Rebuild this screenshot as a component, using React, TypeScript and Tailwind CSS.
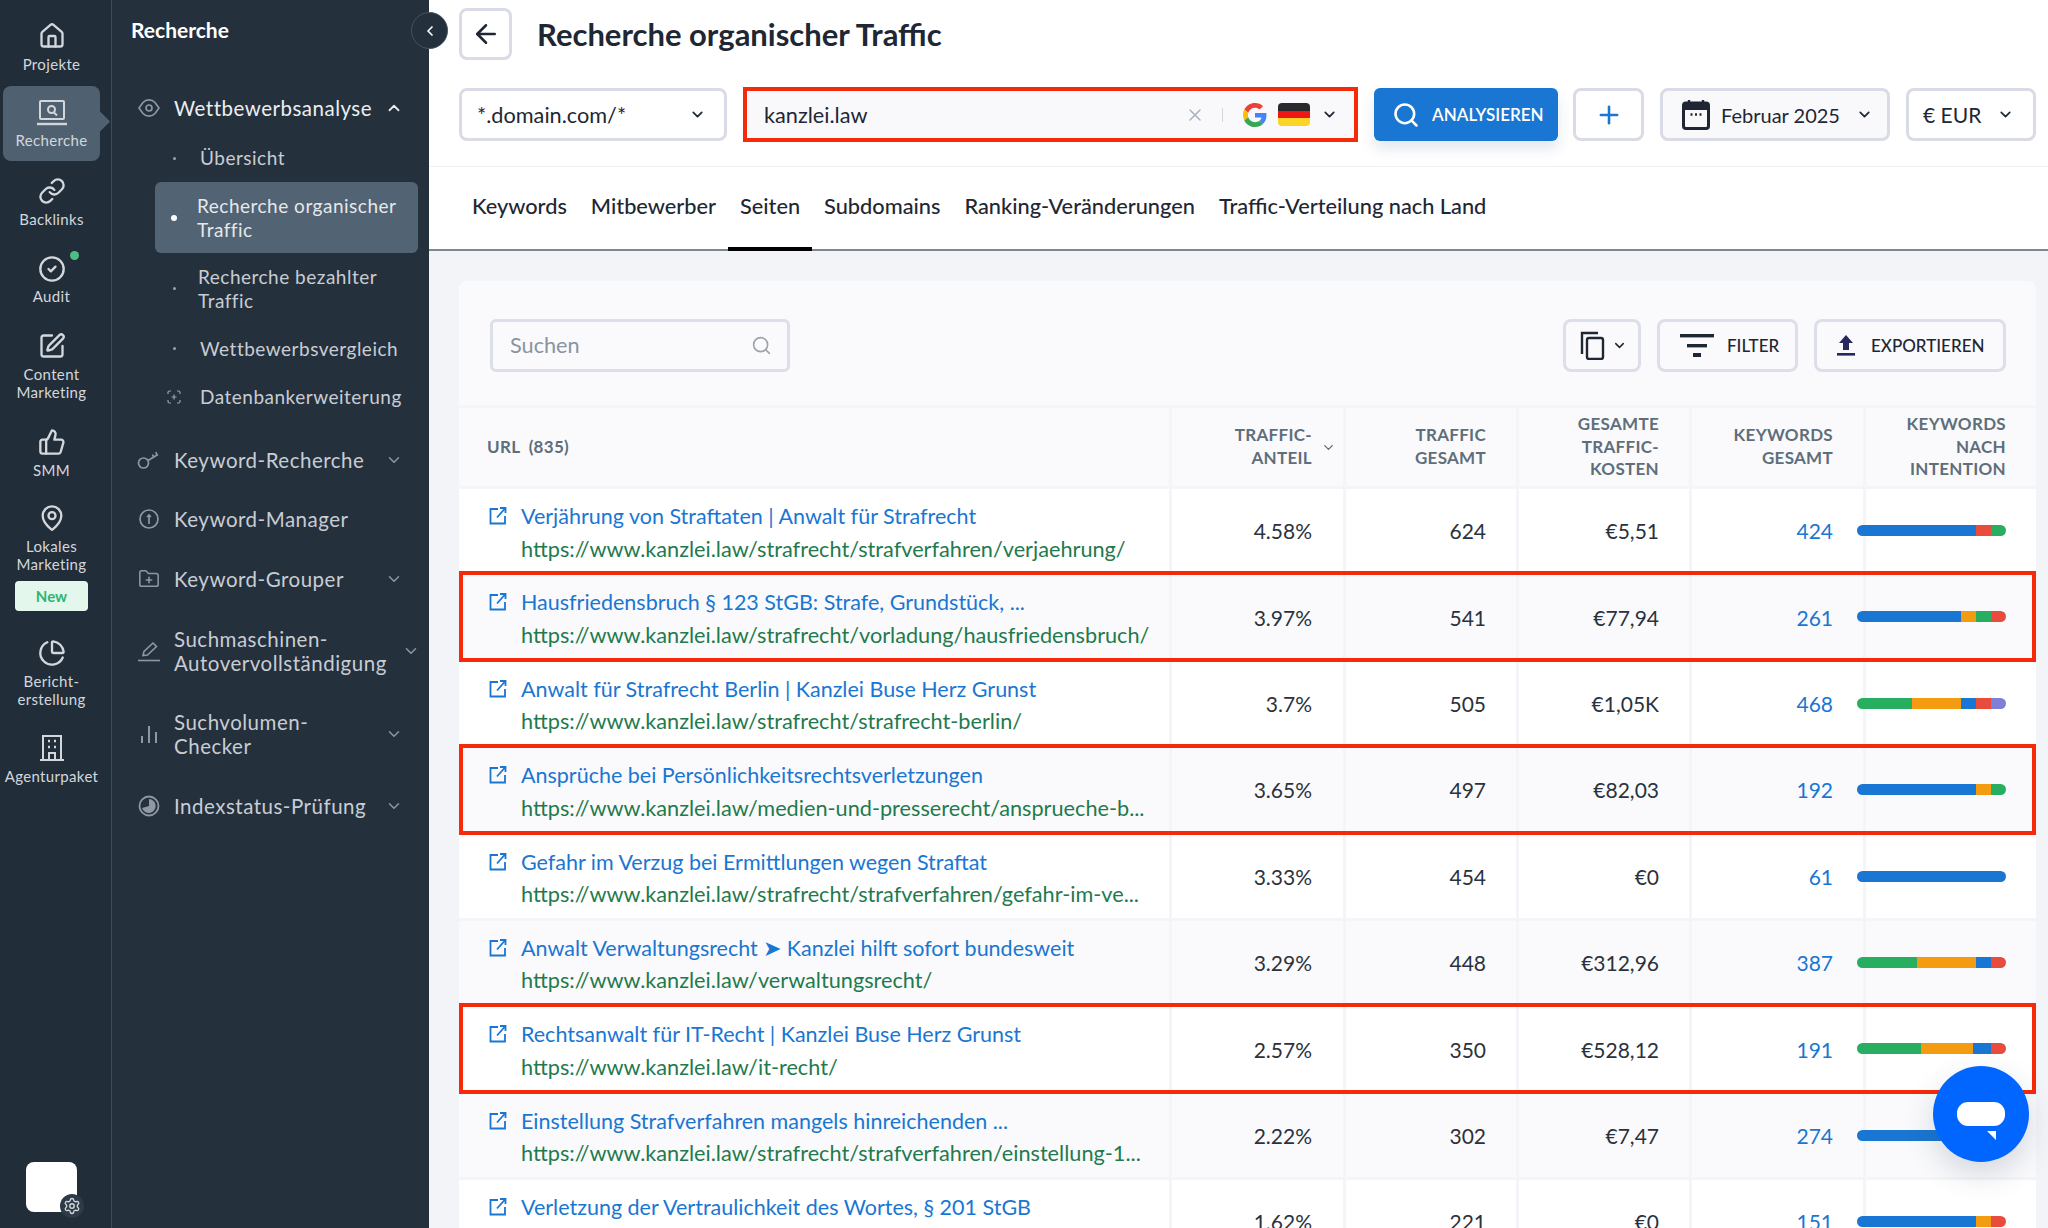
import React from "react";
import {
  ArrowLeft,
  ChartPie,
  ChevronDown,
  ChevronLeft,
  ChevronUp,
  CircleCheck,
  FolderPlus,
  House,
  Link,
  MapPin,
  Plus,
  Search,
  Settings,
  SquarePen,
  ThumbsUp,
  X,
} from "lucide-react";

const LaptopSearch = () => (
  <svg width="30" height="28" viewBox="0 0 30 28" fill="none" stroke="#d3d7dc" strokeWidth="2">
    <rect x="3" y="2" width="24" height="18" rx="1" />
    <circle cx="14.5" cy="10.5" r="3.5" />
    <path d="M17 13.5l3 3" />
    <path d="M0 25h30" strokeWidth="2.4" />
  </svg>
);

const OfficeBuilding = () => (
  <svg width="28" height="28" viewBox="0 0 28 28" fill="none" stroke="#d3d7dc" strokeWidth="2">
    <path d="M5 26V2h18v24" />
    <path d="M2 26h24" />
    <path d="M11 26v-7h6v7" />
    <path d="M10 7h2M16 7h2M10 13h2M16 13h2" strokeWidth="2.4" />
  </svg>
);

const TargetEye = () => (
  <svg width="22" height="20" viewBox="0 0 22 20" fill="none" stroke="#8e98a3" strokeWidth="1.7">
    <path d="M1 10l4-5.5a8 8 0 0 1 12 0L21 10l-4 5.5a8 8 0 0 1-12 0z" />
    <circle cx="11" cy="10" r="3" />
  </svg>
);

const KeyIcon = () => (
  <svg width="24" height="20" viewBox="0 0 24 20" fill="none" stroke="#8e98a3" strokeWidth="1.7">
    <circle cx="6.5" cy="13" r="5" />
    <path d="M11 10.5l10-6M16.5 7l-1-2.5M20 5l-1.2-3" />
  </svg>
);

const ManagerIcon = () => (
  <svg width="22" height="22" viewBox="0 0 22 22" fill="none" stroke="#8e98a3" strokeWidth="1.7">
    <circle cx="11" cy="11" r="9" />
    <path d="M11 16V7M9 9l2-2 2 2" />
  </svg>
);

const PenUnderline = () => (
  <svg width="24" height="22" viewBox="0 0 24 22" fill="none" stroke="#8e98a3" strokeWidth="1.6">
    <path d="M6 15.5l1-4L16 3l3.5 3.5-9 8.5z" />
    <path d="M1 20.5h22" />
  </svg>
);

const BarsIcon = () => (
  <svg width="20" height="20" viewBox="0 0 20 20" fill="none" stroke="#8e98a3" strokeWidth="2">
    <path d="M3 19v-7M10 19V2M17 19V8" />
  </svg>
);

const IndexIcon = () => (
  <svg width="22" height="22" viewBox="0 0 22 22" fill="none">
    <circle cx="11" cy="11" r="9.5" stroke="#8e98a3" strokeWidth="1.8" />
    <path d="M11 4a7 7 0 1 1-7 9l7-2z" fill="#8e98a3" />
  </svg>
);

const DashedPlus = () => (
  <svg width="14" height="14" viewBox="0 0 14 14" fill="none" stroke="#9aa3ad" strokeWidth="1.2">
    <path d="M1 4V2.5A1.5 1.5 0 0 1 2.5 1H4M10 1h1.5A1.5 1.5 0 0 1 13 2.5V4M13 10v1.5a1.5 1.5 0 0 1-1.5 1.5H10M4 13H2.5A1.5 1.5 0 0 1 1 11.5V10" />
    <path d="M7 4.5v5M4.5 7h5" />
  </svg>
);

const OpenLink = () => (
  <svg width="18" height="18" viewBox="0 0 18 18" fill="none" stroke="#1976d2" strokeWidth="1.8">
    <path d="M9 2H1.5v14.5H16V9" />
    <path d="M8 10.5L16 1.5M11 1h5.5v5" />
  </svg>
);

const GoogleG = () => (
  <svg width="24" height="24" viewBox="0 0 48 48">
    <path fill="#EA4335" d="M24 9.5c3.54 0 6.71 1.22 9.21 3.6l6.85-6.85C35.9 2.38 30.47 0 24 0 14.62 0 6.51 5.38 2.56 13.22l7.98 6.19C12.43 13.72 17.74 9.5 24 9.5z" />
    <path fill="#4285F4" d="M46.98 24.55c0-1.57-.15-3.09-.38-4.55H24v9.02h12.94c-.58 2.96-2.26 5.48-4.78 7.18l7.73 6c4.51-4.18 7.09-10.36 7.09-17.65z" />
    <path fill="#FBBC05" d="M10.53 28.59c-.48-1.45-.76-2.99-.76-4.59s.27-3.14.76-4.59l-7.98-6.19C.92 16.46 0 20.12 0 24c0 3.88.92 7.54 2.56 10.78l7.97-6.19z" />
    <path fill="#34A853" d="M24 48c6.48 0 11.93-2.13 15.89-5.81l-7.73-6c-2.15 1.45-4.92 2.3-8.16 2.3-6.26 0-11.57-4.22-13.47-9.91l-7.98 6.19C6.51 42.62 14.62 48 24 48z" />
  </svg>
);

const CalendarIcon = () => (
  <svg width="28" height="31" viewBox="0 0 28 31" fill="none">
    <rect x="1.5" y="4" width="25" height="25.5" rx="2.5" stroke="#1e2733" strokeWidth="3" />
    <path d="M1.5 6.5a2.5 2.5 0 0 1 2.5-2.5h20a2.5 2.5 0 0 1 2.5 2.5V11h-25z" fill="#1e2733" />
    <path d="M7 1v4M21 1v4" stroke="#1e2733" strokeWidth="2.4" />
    <path d="M8.5 15.5h2M13 15.5h2M17.5 15.5h2" stroke="#1e2733" strokeWidth="2.4" />
  </svg>
);

const CopyIcon = () => (
  <svg width="26" height="29" viewBox="0 0 26 29" fill="none" stroke="#1e2733" strokeWidth="2.4">
    <path d="M2 23V2h16" />
    <rect x="7" y="7" width="16" height="21" rx="2" />
  </svg>
);

const FilterIcon = () => (
  <svg width="34" height="24" viewBox="0 0 34 24" fill="#1e2733">
    <rect x="0" y="0" width="34" height="3.4" />
    <rect x="7" y="10" width="20" height="3.4" />
    <rect x="13" y="19" width="8" height="4" />
  </svg>
);

const UploadIcon = () => (
  <svg width="20" height="21" viewBox="0 0 20 21" fill="#26295e">
    <path d="M10 0l7 8h-4v7H7V8H3z" />
    <rect x="1" y="18" width="18" height="2.6" />
  </svg>
);

const ChatIcon = () => (
  <svg width="48" height="38" viewBox="0 0 48 38" fill="#fff">
    <rect x="0" y="0" width="48" height="24" rx="11" />
    <path d="M30 29h9v9z" />
  </svg>
);

type RailItem = {
  label: string[];
  icon: React.ReactNode;
  height: string;
  active?: boolean;
  dot?: boolean;
  badge?: boolean;
};

const railIconProps = { size: 28, color: "#d3d7dc", strokeWidth: 2 };

const railItems: RailItem[] = [
  { label: ["Projekte"], icon: <House {...railIconProps} />, height: "h-[77.5px]" },
  { label: ["Recherche"], icon: <LaptopSearch />, height: "h-[77.5px]", active: true },
  { label: ["Backlinks"], icon: <Link {...railIconProps} />, height: "h-[77.5px]" },
  { label: ["Audit"], icon: <CircleCheck {...railIconProps} />, height: "h-[77.5px]", dot: true },
  { label: ["Content", "Marketing"], icon: <SquarePen {...railIconProps} />, height: "h-[96px]" },
  { label: ["SMM"], icon: <ThumbsUp {...railIconProps} />, height: "h-[76px]" },
  { label: ["Lokales", "Marketing"], icon: <MapPin {...railIconProps} />, height: "h-[135px]", badge: true },
  { label: ["Bericht-", "erstellung"], icon: <ChartPie {...railIconProps} />, height: "h-[95px]" },
  { label: ["Agenturpaket"], icon: <OfficeBuilding />, height: "h-[77.5px]" },
];

const Rail = () => (
  <div className="flex h-full w-[112px] shrink-0 flex-col border-r border-[#3f4b58] bg-[#212d39] pt-[9px]">
    {railItems.map((item) => (
      <div key={item.label[0]} className={`${item.height} ml-[3px] w-[97px] shrink-0`}>
        <div
          className={`relative flex flex-col items-center rounded-lg pt-[13px] ${
            item.active ? "-mt-[1px] h-[75px] bg-[#4f6171]" : ""
          }`}
        >
          <div className="relative flex h-[28px] items-center justify-center">
            {item.icon}
            {item.dot && <span className="absolute -right-[13px] -top-[4px] h-[9px] w-[9px] rounded-full bg-[#4ebd85]" />}
          </div>
          <div className="mt-[4.5px] flex flex-col items-center text-[15px] leading-[18px] tracking-[0.35px] text-[#d3d7dc]">
            {item.label.map((l) => (
              <span key={l} className="whitespace-nowrap">
                {l}
              </span>
            ))}
          </div>
          {item.badge && (
            <div className="mt-[8.5px] flex h-[30px] w-[73px] items-center justify-center rounded bg-[#e4f7ec] text-[15px] font-bold text-[#2bb673]">
              New
            </div>
          )}
          {item.active && <span className="absolute -right-[7px] top-[28px] h-[15px] w-[15px] rotate-45 bg-[#4f6171]" />}
        </div>
      </div>
    ))}
    <div className="relative mb-[16px] ml-[26px] mt-auto h-[50px] w-[51px] rounded-lg bg-white">
      <div className="absolute -bottom-[6px] -right-[7px] flex h-[24px] w-[24px] items-center justify-center rounded-full bg-[#2d3a48]">
        <Settings size={18} color="#d3d7dc" strokeWidth={1.8} />
      </div>
    </div>
  </div>
);

const MenuRow = ({
  icon,
  label,
  mt,
  height = "h-[40px]",
  chevron = "down",
  bright,
  chevronShift,
  noChevron,
}: {
  icon: React.ReactNode;
  label: React.ReactNode;
  mt: string;
  height?: string;
  chevron?: "down" | "up";
  bright?: boolean;
  chevronShift?: boolean;
  noChevron?: boolean;
}) => (
  <div className={`${mt} ${height} flex shrink-0 items-center`}>
    <div className="flex w-[62px] justify-end pr-[13px]">
      <div className="flex w-[24px] justify-center">{icon}</div>
    </div>
    <div className={`flex-1 whitespace-nowrap text-[20.5px] leading-[24px] tracking-[0.5px] ${bright ? "text-[#eceef0]" : "text-[#c8cdd3]"}`}>
      {label}
    </div>
    {noChevron ? null : chevron === "up" ? (
      <ChevronUp size={18} color="#e6e8eb" strokeWidth={2.4} className="mr-[26px]" />
    ) : (
      <ChevronDown size={18} color="#8e98a3" strokeWidth={2} className={chevronShift ? "mr-[9px]" : "mr-[26px]"} />
    )}
  </div>
);

const SubRow = ({
  label,
  mt,
  height = "h-[40px]",
  icon,
  textLeft = "pl-[7px]",
}: {
  label: React.ReactNode;
  mt: string;
  height?: string;
  icon?: React.ReactNode;
  textLeft?: string;
}) => (
  <div className={`${mt} ${height} flex shrink-0 items-center whitespace-nowrap pl-[43px] text-[19px] leading-[24px] tracking-[0.5px] text-[#c8cdd3]`}>
    <div className="flex w-[38px] justify-center">
      {icon ?? <span className="h-[3px] w-[3px] rounded-full bg-[#9aa3ad]" />}
    </div>
    <div className={textLeft}>{label}</div>
  </div>
);

const Panel = () => (
  <div className="relative flex h-full w-[317px] shrink-0 flex-col bg-[#25303d]">
    <div className="flex h-[60px] shrink-0 items-center pl-[19px] text-[21px] font-bold text-white">Recherche</div>
    <MenuRow icon={<TargetEye />} label="Wettbewerbsanalyse" mt="mt-[28px]" chevron="up" bright />
    <SubRow label="Übersicht" mt="mt-[10px]" />
    <div className="ml-[43px] mt-[4px] flex h-[71px] w-[263px] shrink-0 items-center whitespace-nowrap rounded-md bg-[#526373] text-[19px] leading-[24px] tracking-[0.5px] text-[#e6e8eb]">
      <div className="flex w-[38px] justify-center">
        <span className="h-[6px] w-[6px] rounded-full bg-white" />
      </div>
      <div className="pl-[4px]">
        Recherche organischer
        <br />
        Traffic
      </div>
    </div>
    <SubRow
      label={
        <>
          Recherche bezahlter
          <br />
          Traffic
        </>
      }
      mt="mt-0"
      height="h-[71px]"
      textLeft="pl-[5px]"
    />
    <SubRow label="Wettbewerbsvergleich" mt="mt-[4.5px]" />
    <SubRow label="Datenbankerweiterung" mt="mt-[8px]" icon={<DashedPlus />} />
    <MenuRow icon={<KeyIcon />} label="Keyword-Recherche" mt="mt-[23px]" />
    <MenuRow icon={<ManagerIcon />} label="Keyword-Manager" mt="mt-[19px]" noChevron />
    <MenuRow icon={<FolderPlus size={22} color="#8e98a3" strokeWidth={1.7} />} label="Keyword-Grouper" mt="mt-[20px]" />
    <MenuRow
      icon={<PenUnderline />}
      label={
        <>
          Suchmaschinen-
          <br />
          Autovervollständigung
        </>
      }
      mt="mt-[28px]"
      height="h-[48px]"
      chevronShift
    />
    <MenuRow
      icon={<BarsIcon />}
      label={
        <>
          Suchvolumen-
          <br />
          Checker
        </>
      }
      mt="mt-[35px]"
      height="h-[48px]"
    />
    <MenuRow icon={<IndexIcon />} label="Indexstatus-Prüfung" mt="mt-[28px]" />
    <div className="absolute -right-[19px] top-[12px] z-10 flex h-[37px] w-[37px] items-center justify-center rounded-full border border-[#46525f] bg-[#25303d]">
      <ChevronLeft size={16} color="#fff" strokeWidth={2.6} />
    </div>
  </div>
);

const SelectButton = ({ className, children }: { className: string; children: React.ReactNode }) => (
  <div className={`flex h-[53px] items-center rounded-lg border-[3px] border-[#d9dbe7] ${className}`}>{children}</div>
);

const DarkChevron = () => <ChevronDown size={17} color="#1e2733" strokeWidth={2.4} />;

const Toolbar = () => (
  <div className="mt-[19px] flex h-[55px] shrink-0 items-center pl-[30px] text-[21.7px] text-[#1e2733]">
    <SelectButton className="w-[268px] justify-between bg-white pl-[15px] pr-[18px]">
      <span className="pt-[2px]">*.domain.com/*</span>
      <DarkChevron />
    </SelectButton>
    <div className="ml-[16px] flex h-[55px] w-[615px] items-center border-4 border-[#f52a0a] bg-[#f9f9fc] pl-[17px] pr-[16px]">
      <span className="flex-1 pt-[2px]">kanzlei.law</span>
      <X size={20} color="#aab1ba" strokeWidth={1.8} />
      <span className="ml-[17px] mr-[20px] h-[14px] w-px bg-[#d4d7df]" />
      <GoogleG />
      <div className="ml-[11px] flex h-[23px] w-[32px] flex-col overflow-hidden rounded-[4px]">
        <div className="flex-1 bg-[#2a2a2e]" />
        <div className="flex-1 bg-[#ef1616]" />
        <div className="flex-1 bg-[#fdd426]" />
      </div>
      <div className="ml-[11px]">
        <DarkChevron />
      </div>
    </div>
    <div className="ml-[16px] flex h-[53px] w-[184px] items-center rounded-md bg-[#1976d2] pl-[18px] text-[17px] font-semibold text-white shadow-[0_8px_14px_rgba(25,60,120,0.12)]">
      <Search size={28} color="#fff" strokeWidth={2.2} />
      <span className="ml-[12px]">ANALYSIEREN</span>
    </div>
    <SelectButton className="ml-[15px] w-[71px] justify-center bg-white">
      <Plus size={28} color="#1976d2" strokeWidth={2.2} />
    </SelectButton>
    <SelectButton className="ml-[16px] w-[230px] bg-[#f9f9fc] pl-[19px] text-[20px]">
      <CalendarIcon />
      <span className="ml-[11px]">Februar 2025</span>
      <div className="ml-[16px]">
        <DarkChevron />
      </div>
    </SelectButton>
    <SelectButton className="ml-[16px] w-[130px] bg-white pl-[14px] text-[21px]">
      <span>€ EUR</span>
      <div className="ml-[16px]">
        <DarkChevron />
      </div>
    </SelectButton>
  </div>
);

const tabs = ["Keywords", "Mitbewerber", "Seiten", "Subdomains", "Ranking-Veränderungen", "Traffic-Verteilung nach Land"];

const Tabs = () => (
  <div className="mt-[24px] flex h-[85px] shrink-0 border-t border-b-2 border-t-[#f1f2f6] border-b-[#7d8894] pl-[31px]">
    {tabs.map((t) => (
      <div
        key={t}
        className={`-mb-[2px] flex items-center border-b-4 px-[12px] pb-[2px] text-[21.75px] font-medium text-[#1e2733] ${
          t === "Seiten" ? "border-black" : "border-transparent"
        }`}
      >
        {t}
      </div>
    ))}
  </div>
);

type Seg = { c: string; w: number };

const B = "bg-[#1976d2]";
const R = "bg-[#e74c3c]";
const G = "bg-[#27ae60]";
const O = "bg-[#f39c12]";
const P = "bg-[#7f7fd5]";

type Row = {
  title: string;
  url?: string;
  share: string;
  traffic: string;
  cost: string;
  kw: string;
  bar: Seg[];
  red?: boolean;
};

const rows: Row[] = [
  {
    title: "Verjährung von Straftaten | Anwalt für Strafrecht",
    url: "https://www.kanzlei.law/strafrecht/strafverfahren/verjaehrung/",
    share: "4.58%",
    traffic: "624",
    cost: "€5,51",
    kw: "424",
    bar: [{ c: B, w: 80 }, { c: R, w: 10 }, { c: G, w: 10 }],
  },
  {
    title: "Hausfriedensbruch § 123 StGB: Strafe, Grundstück, ...",
    url: "https://www.kanzlei.law/strafrecht/vorladung/hausfriedensbruch/",
    share: "3.97%",
    traffic: "541",
    cost: "€77,94",
    kw: "261",
    bar: [{ c: B, w: 70 }, { c: O, w: 10 }, { c: G, w: 10 }, { c: R, w: 10 }],
    red: true,
  },
  {
    title: "Anwalt für Strafrecht Berlin | Kanzlei Buse Herz Grunst",
    url: "https://www.kanzlei.law/strafrecht/strafrecht-berlin/",
    share: "3.7%",
    traffic: "505",
    cost: "€1,05K",
    kw: "468",
    bar: [{ c: G, w: 37 }, { c: O, w: 33 }, { c: B, w: 10 }, { c: R, w: 10 }, { c: P, w: 10 }],
  },
  {
    title: "Ansprüche bei Persönlichkeitsrechtsverletzungen",
    url: "https://www.kanzlei.law/medien-und-presserecht/ansprueche-b...",
    share: "3.65%",
    traffic: "497",
    cost: "€82,03",
    kw: "192",
    bar: [{ c: B, w: 80 }, { c: O, w: 10 }, { c: G, w: 10 }],
    red: true,
  },
  {
    title: "Gefahr im Verzug bei Ermittlungen wegen Straftat",
    url: "https://www.kanzlei.law/strafrecht/strafverfahren/gefahr-im-ve...",
    share: "3.33%",
    traffic: "454",
    cost: "€0",
    kw: "61",
    bar: [{ c: B, w: 100 }],
  },
  {
    title: "Anwalt Verwaltungsrecht ➤ Kanzlei hilft sofort bundesweit",
    url: "https://www.kanzlei.law/verwaltungsrecht/",
    share: "3.29%",
    traffic: "448",
    cost: "€312,96",
    kw: "387",
    bar: [{ c: G, w: 40.5 }, { c: O, w: 39.5 }, { c: B, w: 10 }, { c: R, w: 10 }],
  },
  {
    title: "Rechtsanwalt für IT-Recht | Kanzlei Buse Herz Grunst",
    url: "https://www.kanzlei.law/it-recht/",
    share: "2.57%",
    traffic: "350",
    cost: "€528,12",
    kw: "191",
    bar: [{ c: G, w: 43 }, { c: O, w: 35 }, { c: B, w: 12 }, { c: R, w: 10 }],
    red: true,
  },
  {
    title: "Einstellung Strafverfahren mangels hinreichenden ...",
    url: "https://www.kanzlei.law/strafrecht/strafverfahren/einstellung-1...",
    share: "2.22%",
    traffic: "302",
    cost: "€7,47",
    kw: "274",
    bar: [{ c: B, w: 100 }],
  },
  {
    title: "Verletzung der Vertraulichkeit des Wortes, § 201 StGB",
    share: "1.62%",
    traffic: "221",
    cost: "€0",
    kw: "151",
    bar: [{ c: B, w: 80 }, { c: O, w: 10 }, { c: R, w: 10 }],
  },
];

const gridCols = "grid grid-cols-[710px_174px_173px_173px_174px_173px]";
const cellSep = "border-l-[3px] border-[#f5f5f9]";

const HeaderCell = ({ lines, extra }: { lines: string[]; extra?: React.ReactNode }) => (
  <div className={`${cellSep} flex items-center justify-end ${extra ? "pr-[7px]" : "pr-[30px]"}`}>
    <div className="text-right">
      {lines.map((l) => (
        <div key={l}>{l}</div>
      ))}
    </div>
    {extra}
  </div>
);

const ValueCell = ({ value, blue, pr = "pr-[30px]" }: { value: string; blue?: boolean; pr?: string }) => (
  <div className={`${cellSep} ${pr} flex items-center justify-end pt-[1px] text-[21px] ${blue ? "text-[#1976d2]" : "text-[#2a323d]"}`}>
    {value}
  </div>
);

const TableRow = ({ row, index }: { row: Row; index: number }) => (
  <div className={`relative h-[83px] shrink-0 ${gridCols} ${index % 2 === 1 ? "bg-[#fafafc]" : "bg-white"}`}>
    <div className="flex overflow-hidden pl-[30px] pt-[11px]">
      <div className="mt-[7px] w-[32px] shrink-0">
        <OpenLink />
      </div>
      <div className="whitespace-nowrap leading-[32.5px]">
        <div className="text-[21.5px] text-[#1976d2]">{row.title}</div>
        {row.url && <div className="text-[21.7px] text-[#1f7a4d]">{row.url}</div>}
      </div>
    </div>
    <ValueCell value={row.share} pr="pr-[31px]" />
    <ValueCell value={row.traffic} />
    <ValueCell value={row.cost} />
    <ValueCell value={row.kw} blue />
    <div className={`${cellSep} flex items-center`}>
      <div className="-ml-[9px] flex h-[11px] w-[149px] overflow-hidden rounded-full">
        {row.bar.map((s, i) => (
          <div key={i} className={`h-full ${s.c}`} style={{ width: `${s.w}%` }} />
        ))}
      </div>
    </div>
    {row.red && <div className="pointer-events-none absolute -inset-y-[4px] inset-x-0 z-[1] border-4 border-[#f52a0a]" />}
  </div>
);

const ToolButton = ({ className, children }: { className: string; children: React.ReactNode }) => (
  <div className={`flex h-[53px] items-center rounded-lg border-[3px] border-[#dcdee9] bg-[#fafafc] ${className}`}>{children}</div>
);

const Card = () => (
  <div className="ml-[30px] mt-[30px] flex w-[1577px] flex-col gap-[3px] rounded-t-lg bg-[#f5f5f9]">
    <div className="flex h-[124px] shrink-0 items-start justify-between rounded-t-lg bg-[#fafafc] pl-[31px] pr-[30px] pt-[38px]">
      <div className="flex h-[53px] w-[300px] items-center justify-between rounded-md border-[3px] border-[#dcdee9] pl-[17px] pr-[15px] text-[21.7px] text-[#8a939e]">
        <span>Suchen</span>
        <Search size={21} color="#9ba3ad" strokeWidth={1.8} />
      </div>
      <div className="flex gap-[16px] text-[17px] font-medium text-[#1e2733]">
        <ToolButton className="w-[78px] pl-[14px]">
          <CopyIcon />
          <div className="ml-[6px]">
            <ChevronDown size={15} color="#1e2733" strokeWidth={2.4} />
          </div>
        </ToolButton>
        <ToolButton className="w-[141px] pl-[20px]">
          <FilterIcon />
          <span className="ml-[13px]">FILTER</span>
        </ToolButton>
        <ToolButton className="w-[192px] pl-[19px]">
          <UploadIcon />
          <span className="ml-[15px]">EXPORTIEREN</span>
        </ToolButton>
      </div>
    </div>
    <div className={`h-[78px] shrink-0 bg-[#fafafc] ${gridCols} text-[17px] font-bold uppercase leading-[22.7px] tracking-[0.3px] text-[#5f6e7b]`}>
      <div className="flex items-center pl-[28px]">URL&nbsp;&nbsp;(835)</div>
      <HeaderCell
        lines={["Traffic-", "Anteil"]}
        extra={
          <div className="ml-[9px]">
            <ChevronDown size={15} color="#5f6e7b" strokeWidth={2.2} />
          </div>
        }
      />
      <HeaderCell lines={["Traffic", "gesamt"]} />
      <HeaderCell lines={["Gesamte", "Traffic-", "Kosten"]} />
      <HeaderCell lines={["Keywords", "gesamt"]} />
      <HeaderCell lines={["Keywords", "nach", "Intention"]} />
    </div>
    <div className="flex flex-col gap-[3.4px]">
      {rows.map((r, i) => (
        <TableRow key={r.title} row={r} index={i} />
      ))}
    </div>
  </div>
);

export default function App() {
  return (
    <div className="relative flex h-[1228px] w-[2048px] overflow-hidden bg-white font-['Lato',sans-serif]">
      <Rail />
      <Panel />
      <div className="flex h-full min-w-0 flex-1 flex-col overflow-hidden bg-white">
        <div className="flex h-[68px] shrink-0 items-start pl-[30px] pt-[8px]">
          <div className="flex h-[52px] w-[53px] items-center justify-center rounded-lg border-[3px] border-[#d9dbe7]">
            <ArrowLeft size={30} color="#1e2733" strokeWidth={2} />
          </div>
          <h1 className="ml-[25px] text-[31px] font-bold leading-[52px] text-[#1e2733]">Recherche organischer Traffic</h1>
        </div>
        <Toolbar />
        <Tabs />
        <div className="flex-1 bg-[#f2f4f8]">
          <Card />
        </div>
      </div>
      <div className="absolute left-[1933px] top-[1066px] z-10 flex h-[96px] w-[96px] items-center justify-center rounded-full bg-[#0066ff] pt-[13px] shadow-[0_12px_30px_rgba(40,60,90,0.18)]">
        <ChatIcon />
      </div>
    </div>
  );
}
